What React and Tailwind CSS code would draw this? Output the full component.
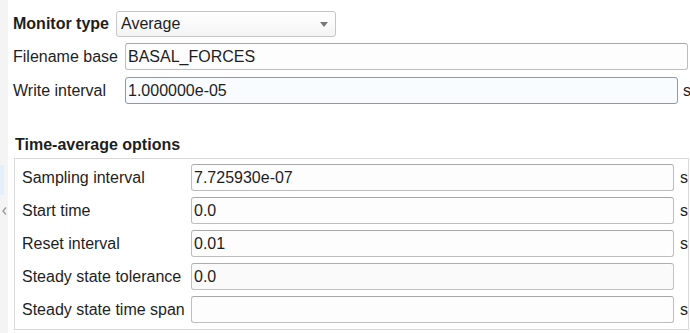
import React from 'react'

const font = { fontFamily: '"Liberation Sans", Arial, sans-serif' }

function Field({ value, width, focused, muted }) {
  const base = 'h-[27px] rounded-[3px] border px-[2px] text-[16px] text-[#1e1e1e] outline-none'
  const look = focused
    ? 'border-[#7d9dbf] bg-[#f8fcff]'
    : muted
    ? 'border-[#c2c2c2] border-t-[#adadad] bg-[#fafafa]'
    : 'border-[#bdbdbd] border-t-[#a8a8a8] bg-[#fdfdfd]'
  return (
    <input
      readOnly
      value={value}
      className={`${base} ${look} ${width}`}
      style={font}
    />
  )
}

export default function App() {
  const groupRows = [
    { label: 'Sampling interval', value: '7.725930e-07', unit: true },
    { label: 'Start time', value: '0.0', unit: true },
    { label: 'Reset interval', value: '0.01', unit: true },
    { label: 'Steady state tolerance', value: '0.0', unit: false, muted: true },
    { label: 'Steady state time span', value: '', unit: true },
  ]

  return (
    <div className="flex w-[690px] h-[333px] overflow-hidden bg-white text-[16px] text-[#1e1e1e]" style={font}>
      {/* side strip */}
      <div className="w-[8px] shrink-0 bg-[#f4f4f4] flex flex-col">
        <div className="h-[165px]"></div>
        <div className="h-[30px] w-[4px] bg-[#e4eff9]"></div>
        <div className="mt-[12px] pl-[2px]">
          <svg width="5" height="8" viewBox="0 0 5 8">
            <path d="M4 0.5 L1 4 L4 7.5" fill="none" stroke="#9c9c9c" strokeWidth="1.4" />
          </svg>
        </div>
      </div>

      <div className="flex-1 flex flex-col pl-[5px]">
        {/* Monitor type */}
        <div className="flex items-center mt-[11px] h-[26px]">
          <span className="font-bold w-[103px]">Monitor type</span>
          <div className="flex items-center justify-between w-[220px] h-[26px] rounded-[3px] border border-[#c6c6c6] bg-gradient-to-b from-white to-[#f4f4f4] pl-[4px] pr-[7px]">
            <span>Average</span>
            <svg width="8" height="5" viewBox="0 0 8 5">
              <path d="M0 0 L8 0 L4 5 Z" fill="#777" />
            </svg>
          </div>
        </div>

        {/* Filename base */}
        <div className="flex items-center mt-[6px]">
          <span className="w-[112px]">Filename base</span>
          <Field value="BASAL_FORCES" width="w-[563px]" />
        </div>

        {/* Write interval */}
        <div className="flex items-center mt-[7px]">
          <span className="w-[112px]">Write interval</span>
          <Field value="1.000000e-05" width="w-[553px]" focused />
          <span className="ml-[5px]">s</span>
        </div>

        {/* Time-average options */}
        <div className="mt-[32px] pl-[2px] font-bold leading-[18px]">Time-average options</div>
        <div className="mt-[4px] ml-[1px] w-[675px] border border-[#d9d9d9] pt-[5px] pb-[6px] pl-[7px] flex flex-col gap-[6px]">
          {groupRows.map((r, i) => (
            <div key={i} className="flex items-center">
              <span className="w-[169px]">{r.label}</span>
              <Field value={r.value} width="w-[483px]" muted={r.muted} />
              {r.unit && <span className="ml-[6px]">s</span>}
            </div>
          ))}
        </div>
      </div>
    </div>
  )
}
